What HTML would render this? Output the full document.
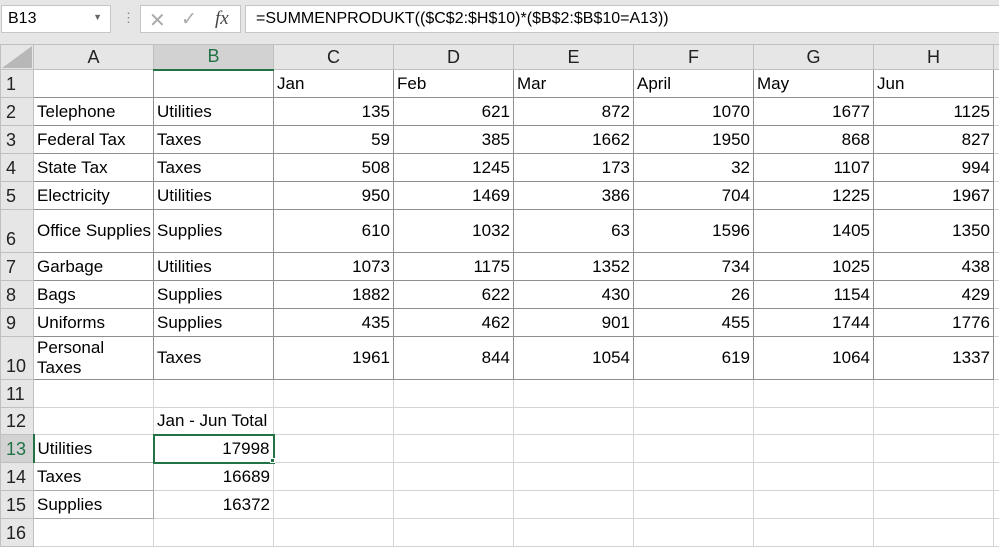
<!DOCTYPE html>
<html><head><meta charset="utf-8"><style>
*{box-sizing:border-box;margin:0;padding:0}
body{width:999px;height:543px;overflow:hidden;background:#fff;font-family:"Liberation Sans",Arial,sans-serif;position:relative}
.bar{position:absolute;left:0;top:0;width:999px;height:44px;background:#e6e6e6}
.nb{position:absolute;left:1px;top:5px;width:110px;height:28px;background:#fff;border:1px solid #c6c6c6;font-size:16px;padding:4px 6px}
.fxb{position:absolute;left:140px;top:5px;width:101px;height:28px;background:#fff;border:1px solid #c6c6c6}
.fb{position:absolute;left:245px;top:5px;width:760px;height:28px;background:#fff;border:1px solid #c6c6c6;font-size:16px;padding:4px 10px}
table{position:absolute;left:0;top:44px;border-collapse:collapse;table-layout:fixed;width:1000px}
td{border:1px solid #d4d4d4;font-size:17px;padding:0 3px;white-space:nowrap;overflow:hidden;vertical-align:bottom;padding-bottom:3px;color:#000}
td.h{background:#e6e6e6;border-color:#c0c0c0;text-align:center;vertical-align:middle;color:#222;font-size:18px;padding:0}
td.rh{background:#e6e6e6;border-color:#c0c0c0;text-align:left;padding-left:5px;color:#222;font-size:18px;vertical-align:bottom;padding-bottom:2px}
td.n{text-align:right}
.d td.c{border-color:#8e8e8e}
td.sel{background:#d2d2d2;color:#217346;border-bottom:2px solid #217346}
td.selr{background:#d2d2d2;color:#217346;border-right:2px solid #217346}
.m td.c{vertical-align:middle;padding-bottom:0}
</style></head><body>
<div class="bar"></div>
<div class="nb">B13<span style="position:absolute;right:8px;top:6px;font-size:9px;color:#666">▼</span></div>
<div style="position:absolute;left:122px;top:10px;color:#888;font-size:13px">⋮</div>
<div class="fxb"><span style="position:absolute;left:8px;top:2px;font-size:20px;color:#aaa">✕</span><span style="position:absolute;left:40px;top:2px;font-size:19px;color:#aaa">✓</span><span style="position:absolute;left:74px;top:2px;font-size:19px;font-style:italic;font-family:'Liberation Serif',serif;color:#444">fx</span></div>
<div class="fb">=SUMMENPRODUKT(($C$2:$H$10)*($B$2:$B$10=A13))</div>
<table>
<colgroup><col style="width:33px"><col style="width:120px"><col style="width:120px"><col style="width:120px"><col style="width:120px"><col style="width:120px"><col style="width:120px"><col style="width:120px"><col style="width:120px"><col style="width:7px"></colgroup>
<tr style="height:25px"><td class="h" style="background:#e6e6e6"></td><td class="h">A</td><td class="h sel">B</td><td class="h">C</td><td class="h">D</td><td class="h">E</td><td class="h">F</td><td class="h">G</td><td class="h">H</td><td class="h"></td></tr>
<tbody class="d">
<tr style="height:28px"><td class="rh">1</td><td class="c"></td><td class="c"></td><td class="c">Jan</td><td class="c">Feb</td><td class="c">Mar</td><td class="c">April</td><td class="c">May</td><td class="c">Jun</td><td></td></tr>
<tr style="height:28px"><td class="rh">2</td><td class="c">Telephone</td><td class="c">Utilities</td><td class="c n">135</td><td class="c n">621</td><td class="c n">872</td><td class="c n">1070</td><td class="c n">1677</td><td class="c n">1125</td><td></td></tr>
<tr style="height:28px"><td class="rh">3</td><td class="c">Federal Tax</td><td class="c">Taxes</td><td class="c n">59</td><td class="c n">385</td><td class="c n">1662</td><td class="c n">1950</td><td class="c n">868</td><td class="c n">827</td><td></td></tr>
<tr style="height:28px"><td class="rh">4</td><td class="c">State Tax</td><td class="c">Taxes</td><td class="c n">508</td><td class="c n">1245</td><td class="c n">173</td><td class="c n">32</td><td class="c n">1107</td><td class="c n">994</td><td></td></tr>
<tr style="height:28px"><td class="rh">5</td><td class="c">Electricity</td><td class="c">Utilities</td><td class="c n">950</td><td class="c n">1469</td><td class="c n">386</td><td class="c n">704</td><td class="c n">1225</td><td class="c n">1967</td><td></td></tr>
<tr class="m" style="height:43px"><td class="rh">6</td><td class="c">Office Supplies</td><td class="c">Supplies</td><td class="c n">610</td><td class="c n">1032</td><td class="c n">63</td><td class="c n">1596</td><td class="c n">1405</td><td class="c n">1350</td><td></td></tr>
<tr style="height:28px"><td class="rh">7</td><td class="c">Garbage</td><td class="c">Utilities</td><td class="c n">1073</td><td class="c n">1175</td><td class="c n">1352</td><td class="c n">734</td><td class="c n">1025</td><td class="c n">438</td><td></td></tr>
<tr style="height:28px"><td class="rh">8</td><td class="c">Bags</td><td class="c">Supplies</td><td class="c n">1882</td><td class="c n">622</td><td class="c n">430</td><td class="c n">26</td><td class="c n">1154</td><td class="c n">429</td><td></td></tr>
<tr style="height:28px"><td class="rh">9</td><td class="c">Uniforms</td><td class="c">Supplies</td><td class="c n">435</td><td class="c n">462</td><td class="c n">901</td><td class="c n">455</td><td class="c n">1744</td><td class="c n">1776</td><td></td></tr>
<tr class="m" style="height:43px"><td class="rh">10</td><td class="c" style="line-height:20px">Personal<br>Taxes</td><td class="c">Taxes</td><td class="c n">1961</td><td class="c n">844</td><td class="c n">1054</td><td class="c n">619</td><td class="c n">1064</td><td class="c n">1337</td><td></td></tr>
</tbody>
<tr style="height:28px"><td class="rh">11</td><td></td><td></td><td></td><td></td><td></td><td></td><td></td><td></td><td></td></tr>
<tr style="height:27px"><td class="rh">12</td><td></td><td>Jan - Jun Total</td><td></td><td></td><td></td><td></td><td></td><td></td><td></td></tr>
<tr style="height:28px"><td class="rh selr">13</td><td style="border-color:#aaa">Utilities</td><td class="n" style="border:2px solid #217346">17998</td><td></td><td></td><td></td><td></td><td></td><td></td><td></td></tr>
<tr style="height:28px"><td class="rh">14</td><td style="border-color:#aaa">Taxes</td><td class="n">16689</td><td></td><td></td><td></td><td></td><td></td><td></td><td></td></tr>
<tr style="height:28px"><td class="rh">15</td><td style="border-color:#aaa">Supplies</td><td class="n">16372</td><td></td><td></td><td></td><td></td><td></td><td></td><td></td></tr>
<tr style="height:28px"><td class="rh">16</td><td></td><td></td><td></td><td></td><td></td><td></td><td></td><td></td><td></td></tr>
</table>
<div style="position:absolute;left:270px;top:458px;width:5px;height:5px;background:#217346;border:1px solid #fff"></div>
<div style="position:absolute;left:0;top:44px;width:0;height:0;border-left:30px solid transparent;border-bottom:22px solid #b8b8b8;margin:2px 0 0 2px"></div>
</body></html>
